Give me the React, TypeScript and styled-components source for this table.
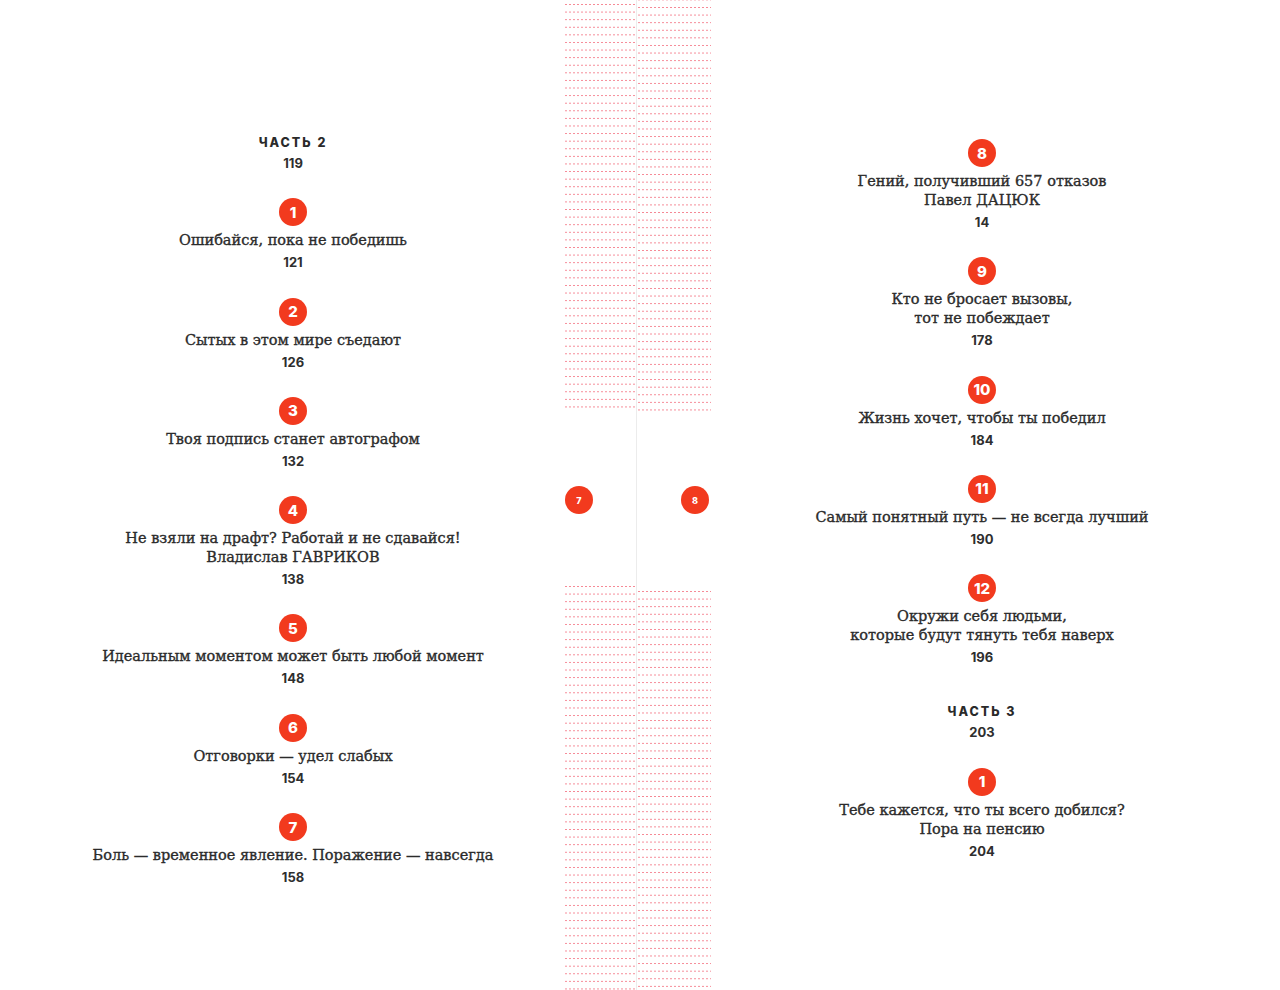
import React from 'react';
import styled, { createGlobalStyle } from 'styled-components';

const GlobalStyle = createGlobalStyle`
  html, body {
    margin: 0;
    padding: 0;
    background: #ffffff;
  }
  body {
    font-family: "DejaVu Serif", "Liberation Serif", serif;
    color: #333333;
  }
`;

type Entry = { num?: number; part?: string; lines: string[]; page: number };

const leftEntries: Entry[] = [
  { part: 'ЧАСТЬ 2', lines: [], page: 119 },
  { num: 1, lines: ['Ошибайся, пока не победишь'], page: 121 },
  { num: 2, lines: ['Сытых в этом мире съедают'], page: 126 },
  { num: 3, lines: ['Твоя подпись станет автографом'], page: 132 },
  { num: 4, lines: ['Не взяли на драфт? Работай и не сдавайся!', 'Владислав ГАВРИКОВ'], page: 138 },
  { num: 5, lines: ['Идеальным моментом может быть любой момент'], page: 148 },
  { num: 6, lines: ['Отговорки — удел слабых'], page: 154 },
  { num: 7, lines: ['Боль — временное явление. Поражение — навсегда'], page: 158 },
];

const rightEntries: Entry[] = [
  { num: 8, lines: ['Гений, получивший 657 отказов', 'Павел ДАЦЮК'], page: 14 },
  { num: 9, lines: ['Кто не бросает вызовы,', 'тот не побеждает'], page: 178 },
  { num: 10, lines: ['Жизнь хочет, чтобы ты победил'], page: 184 },
  { num: 11, lines: ['Самый понятный путь — не всегда лучший'], page: 190 },
  { num: 12, lines: ['Окружи себя людьми,', 'которые будут тянуть тебя наверх'], page: 196 },
  { part: 'ЧАСТЬ 3', lines: [], page: 203 },
  { num: 1, lines: ['Тебе кажется, что ты всего добился?', 'Пора на пенсию'], page: 204 },
];

const Spread = styled.div`
  display: grid;
  grid-template-columns: 564px 73px 74px 1fr;
  height: 990px;
  overflow: hidden;
`;

const Page = styled.div<{ $top: number; $side: 'left' | 'right' }>`
  display: flex;
  flex-direction: column;
  align-items: center;
  gap: 27.3px;
  padding-top: ${p => p.$top}px;
  padding-left: ${p => (p.$side === 'left' ? 22 : 0)}px;
  padding-right: ${p => (p.$side === 'right' ? 27 : 0)}px;
`;

const Item = styled.div<{ $part?: boolean }>`
  display: flex;
  flex-direction: column;
  align-items: center;
  text-align: center;
  margin-top: ${p => (p.$part ? 11 : 0)}px;
`;

const Badge = styled.div<{ $small?: boolean }>`
  width: 28px;
  height: 28px;
  border-radius: 50%;
  background: #f23a1e;
  color: #ffffff;
  display: flex;
  align-items: center;
  justify-content: center;
  font-family: Inter, "Open Sans", sans-serif;
  font-weight: 800;
  font-size: ${p => (p.$small ? 9 : 15)}px;
  line-height: 1;
  flex: none;
`;

const Title = styled.div`
  margin-top: 5px;
  font-family: "DejaVu Serif", "Liberation Serif", serif;
  font-size: 14.5px;
  line-height: 19px;
  color: #2b2b2b;
  -webkit-text-stroke: 0.35px #2b2b2b;
  white-space: nowrap;
`;

const PartLabel = styled.div`
  font-family: Inter, "Open Sans", sans-serif;
  font-weight: 800;
  font-size: 12.5px;
  line-height: 17px;
  letter-spacing: 2px;
  color: #2a2a2a;
`;

const PageNum = styled.div`
  margin-top: 4px;
  font-family: Inter, "Open Sans", sans-serif;
  font-weight: 700;
  font-size: 13px;
  line-height: 16px;
  color: #2e2e2e;
`;

const Half = styled.div<{ $side: 'left' | 'right' }>`
  display: flex;
  flex-direction: column;
  border-${p => (p.$side === 'left' ? 'right' : 'left')}: 1px solid #ececec;
  ${p => (p.$side === 'right' ? 'margin-left: -1px;' : '')}
`;

const Dots = styled.div<{ $h?: number; $shift: number }>`
  ${p => (p.$h ? `height: ${p.$h}px; flex: none;` : 'flex: 1;')}
  background-image: linear-gradient(to right, rgba(240, 70, 90, 0.65) 2px, transparent 2px);
  background-size: 4px 7.6px;
  background-position: 1px ${p => p.$shift}px;
  background-repeat: repeat;
  -webkit-mask-image: linear-gradient(to bottom, #000 1.3px, transparent 1.3px);
  -webkit-mask-size: 100% 7.6px;
  -webkit-mask-position: 0 ${p => p.$shift}px;
  mask-image: linear-gradient(to bottom, #000 1.3px, transparent 1.3px);
  mask-size: 100% 7.6px;
  mask-position: 0 ${p => p.$shift}px;
`;

const Gap = styled.div<{ $h: number; $pad: number; $side: 'left' | 'right' }>`
  height: ${p => p.$h}px;
  flex: none;
  display: flex;
  align-items: flex-start;
  justify-content: ${p => (p.$side === 'left' ? 'flex-start' : 'flex-end')};
  padding: ${p => (p.$side === 'left' ? `${p.$pad}px 0 0 1px` : `${p.$pad}px 2px 0 0`)};
  box-sizing: border-box;
`;

const Column: React.FC<{ entries: Entry[]; top: number; side: 'left' | 'right' }> = ({ entries, top, side }) => (
  <Page $top={top} $side={side}>
    {entries.map((e, i) => (
      <Item key={i} $part={!!e.part && i > 0}>
        {e.part ? <PartLabel>{e.part}</PartLabel> : <Badge>{e.num}</Badge>}
        {e.lines.length > 0 && (
          <Title>
            {e.lines.map((l, j) => (
              <div key={j}>{l}</div>
            ))}
          </Title>
        )}
        <PageNum>{e.page}</PageNum>
      </Item>
    ))}
  </Page>
);

const App: React.FC = () => (
  <>
    <GlobalStyle />
    <Spread>
      <Column entries={leftEntries} top={134} side="left" />
      <Half $side="left">
        <Dots $h={411} $shift={4} />
        <Gap $h={174} $pad={75} $side="left">
          <Badge $small>7</Badge>
        </Gap>
        <Dots $shift={1} />
      </Half>
      <Half $side="right">
        <Dots $h={416} $shift={7} />
        <Gap $h={174} $pad={70} $side="right">
          <Badge $small>8</Badge>
        </Gap>
        <Dots $shift={1} />
      </Half>
      <Column entries={rightEntries} top={139} side="right" />
    </Spread>
  </>
);

export default App;
